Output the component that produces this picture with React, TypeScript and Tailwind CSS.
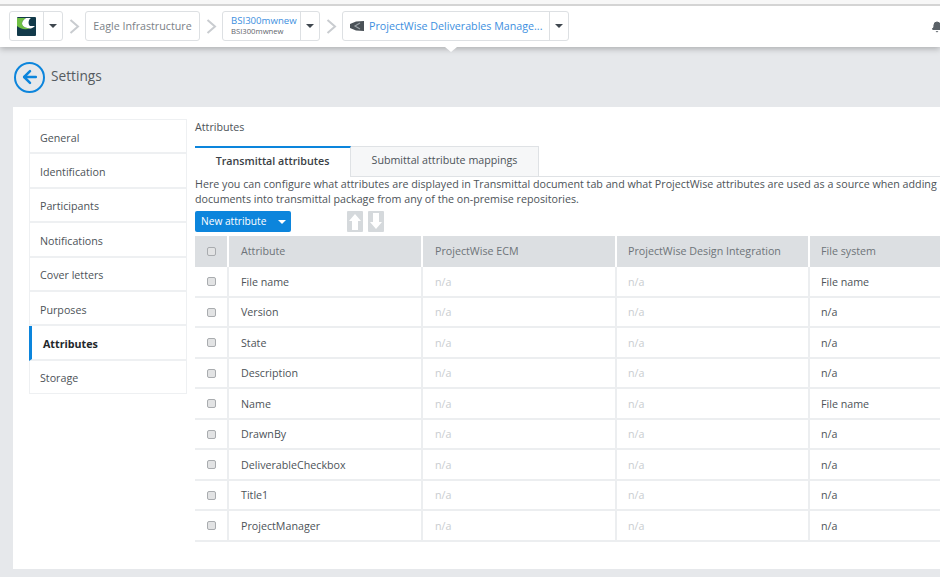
import { ArrowLeft, Bell } from "lucide-react";

const font = { fontFamily: '"Open Sans", sans-serif' };

const menuItems = [
  "General",
  "Identification",
  "Participants",
  "Notifications",
  "Cover letters",
  "Purposes",
  "Attributes",
  "Storage",
];

const rows = [
  { name: "File name", fs: "File name" },
  { name: "Version", fs: "n/a" },
  { name: "State", fs: "n/a" },
  { name: "Description", fs: "n/a" },
  { name: "Name", fs: "File name" },
  { name: "DrawnBy", fs: "n/a" },
  { name: "DeliverableCheckbox", fs: "n/a" },
  { name: "Title1", fs: "n/a" },
  { name: "ProjectManager", fs: "n/a" },
];

function Caret({ color = "border-t-[#3f474f]" }: { color?: string }) {
  return (
    <span
      className={`block w-0 h-0 border-x-[4px] border-x-transparent border-t-[4px] ${color}`}
    />
  );
}

function Crumb() {
  return (
    <span className="w-[22px] shrink-0 flex justify-center">
      <svg width="11" height="15" viewBox="0 0 11 15">
        <path d="M1.5 1L9 7.5L1.5 14" fill="none" stroke="#c9ccd0" strokeWidth="2" />
      </svg>
    </span>
  );
}

function SplitCaret() {
  return (
    <span className="w-[19px] h-full flex items-center justify-center border-l border-[#dde0e3] shrink-0">
      <Caret />
    </span>
  );
}

function Check() {
  return (
    <span className="block w-[9px] h-[9px] rounded-[2px] border border-[#a9acaf] bg-[#e2e3e4]" />
  );
}

function Logo() {
  return (
    <svg width="19" height="19" viewBox="0 0 19 19">
      <rect width="19" height="19" rx="1" fill="#123a4a" />
      <path d="M0 1H9C6 3 5 5 5 7C6 10 9 11 13 11.5C8 13 3 12 0 9Z" fill="#6fbf44" />
      <path d="M9 1H14C11 3 11 7 13 9L18 9C16 11 14 11.5 13 11.5C9 11 6 10 5 7C5 5 6 3 9 1Z" fill="#fff" />
    </svg>
  );
}

function ProductIcon() {
  return (
    <svg width="14" height="10" viewBox="0 0 14 10">
      <path d="M0 3L6 0.5L14 0V10L6 9.5L0 7Z" fill="#4a5157" />
      <path d="M10 2L5 5L10 8" fill="none" stroke="#9aa1a6" strokeWidth="1.2" />
    </svg>
  );
}

export default function App() {
  return (
    <div
      className="w-[940px] h-[577px] overflow-hidden flex flex-col bg-[#e6e8eb] text-[10.7px] text-[#4d5358]"
      style={font}
    >
      {/* top bar */}
      <header className="relative h-[47px] shrink-0 bg-white shadow-[0_2px_6px_rgba(0,0,0,0.25)]">
        <div className="h-[6px] border-b-2 border-[#d4d4d4] bg-[#f7f7f7]" />
        <div className="flex items-center h-[41px] pl-[9px]">
          <div className="flex items-center h-[30px] w-[54px] border border-[#dde0e3] rounded-[3px] -mt-[1px]">
            <span className="w-[34px] flex justify-center">
              <Logo />
            </span>
            <SplitCaret />
          </div>
          <Crumb />
          <div className="flex items-center h-[30px] w-[115px] justify-center border border-[#dde0e3] rounded-[3px] text-[#7a8187] -mt-[1px]">
            Eagle Infrastructure
          </div>
          <Crumb />
          <div className="flex items-center h-[30px] w-[98px] border border-[#dde0e3] rounded-[3px] -mt-[1px]">
            <div className="flex-1 pl-[8px] flex flex-col leading-[10px]">
              <span className="text-[9.6px] text-[#3d8fe0]">BSI300mwnew</span>
              <span className="text-[7.7px] text-[#5f666c]">BSI300mwnew</span>
            </div>
            <SplitCaret />
          </div>
          <Crumb />
          <div className="flex items-center h-[30px] w-[227px] border border-[#dde0e3] rounded-[3px] -mt-[1px]">
            <span className="pl-[7px] pr-[5px] flex">
              <ProductIcon />
            </span>
            <span className="flex-1 whitespace-nowrap text-[#3d8fe0]">
              ProjectWise Deliverables Manage...
            </span>
            <SplitCaret />
          </div>
          <Bell
            className="absolute left-[931px] top-[21px] w-[12px] h-[12px] text-[#5a6167]"
            fill="#5a6167"
          />
        </div>
        <span className="absolute left-[445px] top-[47px] w-0 h-0 border-x-[6px] border-x-transparent border-t-[5px] border-t-white" />
      </header>

      {/* page title */}
      <div className="h-[60px] shrink-0 flex items-center pl-[14px] gap-[6px]">
        <span className="w-[31px] h-[31px] rounded-full border-2 border-[#0c85dc] flex items-center justify-center">
          <ArrowLeft className="w-[20px] h-[20px] text-[#0c85dc]" strokeWidth={3} />
        </span>
        <span className="text-[13.7px] text-[#555b60] -mt-[1px]">Settings</span>
      </div>

      {/* panel */}
      <main className="ml-[13px] h-[462px] w-[927px] shrink-0 bg-white flex pt-[12px] pl-[16px] overflow-hidden">
        <nav className="w-[158px] h-[275px] shrink-0 border border-[#eef0f2] flex flex-col">
          {menuItems.map((item) => (
            <div
              key={item}
              className={
                item === "Attributes"
                  ? "flex-1 flex items-center -ml-[1px] pl-[11px] pt-[3px] border-l-[3px] border-l-[#0c85dc] border-b-2 border-b-[#eef0f2] font-bold text-[#22272b]"
                  : "flex-1 flex items-center pl-[10px] pt-[3px] border-b-2 border-[#eef0f2] last:border-b-0"
              }
            >
              {item}
            </div>
          ))}
        </nav>

        <section className="ml-[8px] w-[760px] shrink-0">
          <h2 className="h-[16px] leading-[16px] font-normal">Attributes</h2>
          <div className="flex h-[31px] mt-[11px] border-b border-[#dfe2e5] w-[760px]">
            <div className="w-[156px] h-[31px] flex items-center justify-center pb-[3px] border-t-2 border-[#0c85dc] border-r border-r-[#dfe2e5] bg-white font-semibold text-[#3a4045]">
              Transmittal attributes
            </div>
            <div className="w-[188px] h-[30px] flex items-center justify-center pb-[2px] border-t border-r border-[#dfe2e5] bg-[#f6f7f8]">
              Submittal attribute mappings
            </div>
          </div>
          <p className="leading-[15px] whitespace-nowrap">
            Here you can configure what attributes are displayed in Transmittal document tab and what ProjectWise attributes are used as a source when adding
            <br />
            documents into transmittal package from any of the on-premise repositories.
          </p>
          <div className="flex items-center h-[21px] mt-[4px]">
            <button className="w-[96px] h-[21px] rounded-[2px] bg-[#0c85dc] text-white text-[10.2px] flex items-center pl-[6px] whitespace-nowrap">
              New attribute
              <span className="ml-[12px]">
                <Caret color="border-t-white" />
              </span>
            </button>
            <div className="ml-[56px] flex gap-[5px]">
              {["M8 3L14 10H11V19H5V10H2Z", "M8 18L14 11H11V2H5V11H2Z"].map((d) => (
                <span key={d} className="w-[16px] h-[21px] bg-[#d5d9dc] rounded-[1px] flex items-center justify-center">
                  <svg width="16" height="21" viewBox="0 0 16 21">
                    <path d={d} fill="#fff" />
                  </svg>
                </span>
              ))}
            </div>
          </div>
          <div className="mt-[4px] w-[760px]">
            <div className="flex h-[31px] items-center bg-[#dcdfe2] text-[#6e7479]">
              <span className="w-[34px] h-full flex items-center justify-center border-r-2 border-white">
                <Check />
              </span>
              <span className="w-[194px] h-full flex items-center pl-[12px] border-r-2 border-white">Attribute</span>
              <span className="w-[194px] h-full flex items-center pl-[12px] border-r-2 border-white">ProjectWise ECM</span>
              <span className="w-[193px] h-full flex items-center pl-[11px] border-r-2 border-white">ProjectWise Design Integration</span>
              <span className="flex-1 h-full flex items-center pl-[11px]">File system</span>
            </div>
            {rows.map((row) => (
              <div key={row.name} className="flex h-[30.5px] items-center border-b-2 border-[#eceef0]">
                <span className="w-[34px] h-full flex items-center justify-center pt-[1px] border-r-2 border-[#eceef0]">
                  <Check />
                </span>
                <span className="w-[194px] h-full flex items-center pl-[12px] pt-[1px] border-r-2 border-[#eceef0]">{row.name}</span>
                <span className="w-[194px] h-full flex items-center pl-[12px] pt-[1px] border-r-2 border-[#eceef0] text-[#c9cdd0]">n/a</span>
                <span className="w-[193px] h-full flex items-center pl-[11px] pt-[1px] border-r-2 border-[#eceef0] text-[#c9cdd0]">n/a</span>
                <span className="flex-1 h-full flex items-center pl-[11px] pt-[1px]">{row.fs}</span>
              </div>
            ))}
          </div>
        </section>
      </main>
    </div>
  );
}
